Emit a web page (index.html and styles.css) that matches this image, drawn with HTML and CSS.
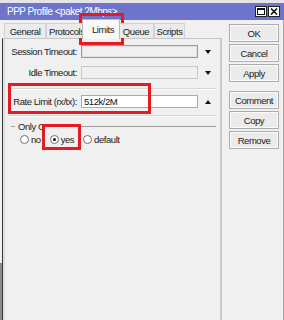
FILE: index.html
```html
<!DOCTYPE html>
<html>
<head>
<meta charset="utf-8">
<link rel="stylesheet" href="styles.css">
</head>
<body>
<div class="win">
  <div class="topline"></div>
  <div class="title">
    <span class="title-text">PPP Profile &lt;paket 2Mbps&gt;</span>
    <div class="title-btns">
      <span class="tbtn"><svg width="8" height="7" viewBox="0 0 8 7"><rect x="0.5" y="0.5" width="7" height="6" fill="none" stroke="#111" stroke-width="1"/><rect x="0" y="0" width="8" height="2" fill="#111"/></svg></span>
      <span class="tbtn"><svg width="8" height="7" viewBox="0 0 8 7"><path d="M1 0.5 L7 6.5 M7 0.5 L1 6.5" stroke="#111" stroke-width="1.6"/></svg></span>
    </div>
  </div>
  <div class="main">
    <div class="edge"></div>
    <div class="left">
      <div class="tabs">
        <div class="tab t-general">General</div>
        <div class="tab t-proto">Protocols</div>
        <div class="tab active">Limits</div>
        <div class="tab t-queue">Queue</div>
        <div class="tab t-scripts">Scripts</div>
      </div>
      <div class="pane">
        <div class="row">
          <span class="lbl">Session Timeout:</span>
          <div class="field dark"></div>
          <span class="arrow down"></span>
        </div>
        <div class="row r-idle">
          <span class="lbl">Idle Timeout:</span>
          <div class="field"></div>
          <span class="arrow down"></span>
        </div>
        <div class="sep"></div>
        <div class="row r-rate">
          <span class="lbl">Rate Limit (rx/tx):</span>
          <div class="field white">512k/2M</div>
          <span class="arrow up"></span>
        </div>
        <div class="sep sep2"></div>
        <div class="group">
          <div class="group-head">
            <span class="gline dash"></span>
            <span class="group-title">Only O</span>
            <span class="gline rest"></span>
          </div>
          <div class="radios">
            <span class="radio"><span class="circle"></span>no</span>
            <span class="radio"><span class="circle checked"></span>yes</span>
            <span class="radio"><span class="circle"></span>default</span>
          </div>
        </div>
      </div>
    </div>
    <div class="right">
      <div class="btn">OK</div>
      <div class="btn">Cancel</div>
      <div class="btn">Apply</div>
      <div class="btn gap">Comment</div>
      <div class="btn">Copy</div>
      <div class="btn">Remove</div>
    </div>
  </div>
  <div class="mark m1"></div>
  <div class="mark m2"></div>
  <div class="mark m3"></div>
</div>
</body>
</html>
```
FILE: styles.css
```css
* { box-sizing: border-box; }
body {
  margin: 0;
  background: #f0f0f0;
  font-family: "Liberation Sans", Arial, sans-serif;
  font-size: 9.5px;
  letter-spacing: -0.45px;
  color: #1a1a1a;
}
.win {
  position: relative;
  width: 284px;
  height: 320px;
  overflow: hidden;
  background: #f0f0f0;
}
.topline { height: 3px; background: #e4e4e4; }
.title {
  height: 17px;
  background: #6d74c9;
  display: flex;
  align-items: center;
  justify-content: space-between;
  padding: 0 4px 0 7px;
  color: #fff;
  font-size: 10px;
  letter-spacing: -0.5px;
}
.title-btns { display: flex; gap: 1px; }
.tbtn {
  width: 12px;
  height: 11px;
  background: #fff;
  border: 1px solid #222;
  display: flex;
  align-items: center;
  justify-content: center;
}
.main { display: flex; height: 300px; }
.edge {
  width: 2px;
  background: linear-gradient(#f0f0f0 0 243px, #8a8a8a 243px);
}
.left { width: 220px; display: flex; flex-direction: column; }
.tabs {
  height: 18px;
  display: flex;
  align-items: flex-end;
  padding-left: 2px;
  position: relative;
  z-index: 1;
}
.tab {
  height: 15px;
  border: 1px solid #d2d2d2;
  border-bottom: 0;
  background: #ebebeb;
  display: flex;
  align-items: center;
  justify-content: center;
  white-space: nowrap;
  overflow: hidden;
  color: #222;
}
.t-general { width: 42px; }
.t-proto { width: 38px; justify-content: flex-start; padding-left: 2px; }
.t-queue { width: 36px; }
.t-scripts { width: 31px; }
.tab.active {
  width: 38px;
  height: 20px;
  margin: 0 -2px -1px;
  background: #f9f9f9;
  border-color: #b8b8b8;
  position: relative;
  z-index: 2;
  padding-left: 4px;
}
.pane {
  flex: 1;
  border-left: 1px solid #3a3a3a;
  border-top: 1px solid #c6c6c6;
  border-right: 2px solid #cacaca;
  box-shadow: inset 2px 0 0 #dedede;
  padding-top: 6px;
}
.row {
  display: grid;
  grid-template-columns: 74px 117px 1fr;
  column-gap: 4px;
  height: 13px;
  align-items: center;
}
.lbl { text-align: right; white-space: nowrap; color: #222; }
.r-idle { margin-top: 8px; }
.r-rate { margin-top: 5px; }
.field {
  height: 13px;
  border: 1px solid #c8c8c8;
  background: #f0f0f0;
}
.field.dark { border-color: #9a9a9a; box-shadow: inset 0 0 0 1px #e2e2e2; }
.field.white {
  background: #fff;
  border-color: #a9abb0;
  padding-left: 2px;
  line-height: 11px;
  color: #111;
}
.arrow { width: 0; height: 0; margin-left: 3px; border-left: 3.5px solid transparent; border-right: 3.5px solid transparent; }
.arrow.down { border-top: 4px solid #111; }
.arrow.up { border-bottom: 4px solid #111; }
.sep {
  margin: 9px 3px 0 5px;
  border-top: 1px solid #d6d6d6;
  border-bottom: 1px solid #fbfbfb;
}
.sep2 { margin-top: 7px; }
.group { margin-top: 4px; }
.group-head {
  height: 10px;
  display: flex;
  align-items: center;
  padding-left: 8px;
  padding-right: 4px;
  gap: 3px;
  color: #222;
}
.gline { height: 1px; background: #a0a0a0; }
.dash { width: 4px; }
.rest { flex: 1; }
.radios {
  margin-top: 3px;
  height: 11px;
  display: flex;
  align-items: center;
  padding-left: 17px;
  gap: 9px;
  color: #222;
}
.radio { display: flex; align-items: center; gap: 2px; }
.circle {
  width: 9px;
  height: 9px;
  border-radius: 50%;
  border: 1px solid #707070;
  background: #fff;
  display: flex;
  align-items: center;
  justify-content: center;
}
.circle.checked::after {
  content: "";
  width: 3px;
  height: 3px;
  border-radius: 50%;
  background: #111;
}
.right {
  width: 62px;
  border-right: 1px solid #a3a3a3;
  padding: 4px 0 0 7px;
  display: flex;
  flex-direction: column;
  gap: 2px;
}
.btn {
  width: 50px;
  height: 18px;
  border: 1px solid #acacac;
  background: #ebebeb;
  box-shadow: inset 0 0 0 1px #fafafa;
  display: flex;
  align-items: center;
  justify-content: center;
  color: #222;
}
.btn.gap { margin-top: 7px; }
.mark {
  position: absolute;
  border: 3px solid #e51b23;
}
.m1 { left: 79px; top: 13px; width: 45px; height: 32px; }
.m2 { left: 8px; top: 83px; width: 143px; height: 31px; }
.m3 { left: 42px; top: 124px; width: 39px; height: 26px; }
```
